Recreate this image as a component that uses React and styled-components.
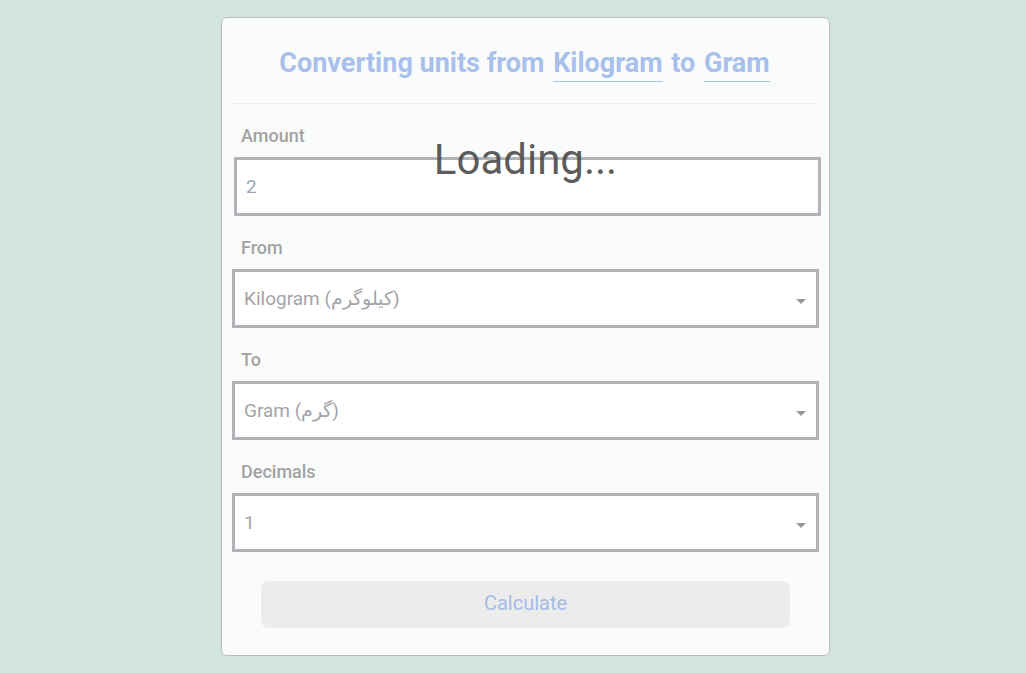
import styled, { createGlobalStyle } from 'styled-components';

const colors = {
  page: '#d2e4de',
  card: '#fafcfb',
  cardBorder: '#bdbdbd',
  accent: '#a8c0ec',
  label: '#a2a2a2',
  field: '#b1b3b8',
  value: '#a2a4a9',
};

const GlobalStyle = createGlobalStyle`
  body {
    margin: 0;
    background: ${colors.page};
    font-family: Roboto, 'Liberation Sans', sans-serif;
  }
`;

const Page = styled.div`
  display: flex;
  justify-content: center;
  align-items: flex-start;
  padding: 17px 0 0 25px;
`;

const Card = styled.div`
  position: relative;
  width: 609px;
  box-sizing: border-box;
  background: ${colors.card};
  border: 1px solid ${colors.cardBorder};
  border-radius: 6px;
  padding: 0 10px 27px;
`;

const Header = styled.div`
  height: 85px;
  display: flex;
  align-items: center;
  justify-content: center;
  border-bottom: 1px solid #eeeff0;
`;

const Title = styled.h1`
  margin: 0;
  font-size: 27px;
  font-weight: 700;
  color: ${colors.accent};
  line-height: 30px;
  padding-top: 8px;
`;

const Unit = styled.span`
  display: inline-block;
  border-bottom: 1px solid ${colors.accent};
  padding-bottom: 4px;
  line-height: 28px;
  margin: 0 2px;
`;

const Form = styled.div`
  display: flex;
  flex-direction: column;
  gap: 22px;
  padding-top: 22px;
`;

const Group = styled.div`
  display: flex;
  flex-direction: column;
  gap: 11px;
`;

const Label = styled.label`
  font-size: 18px;
  font-weight: 500;
  line-height: 20px;
  color: ${colors.label};
  padding-left: 9px;
`;

const Field = styled.div`
  position: relative;
  height: 59px;
  box-sizing: border-box;
  border: 3px solid ${colors.field};
  background: #fff;
  display: flex;
  align-items: center;
  padding: 0 9px;
  margin-left: ${({ $shift }) => ($shift ? '2px' : '0')};
  margin-right: ${({ $shift }) => ($shift ? '-2px' : '0')};
  font-size: 19px;
  color: ${({ $blue }) => ($blue ? '#9aa6b4' : colors.value)};
`;

const Caret = styled.span`
  position: absolute;
  right: 10px;
  top: 50%;
  width: 0;
  height: 0;
  border-left: 5px solid transparent;
  border-right: 5px solid transparent;
  border-top: 5px solid #9a9a9a;
`;

const ButtonRow = styled.div`
  display: flex;
  flex-direction: column;
  padding: 29px 29px 0;
`;

const Button = styled.button`
  height: 47px;
  border: none;
  border-radius: 8px;
  background: #ececec;
  color: #a6bbe6;
  font-family: Roboto, 'Liberation Sans', sans-serif;
  font-size: 20px;
  font-weight: 400;
  padding: 0 0 4px;
`;

const Loading = styled.div`
  position: absolute;
  top: 116px;
  left: 0;
  right: 0;
  text-align: center;
  font-size: 42px;
  line-height: 52px;
  color: rgba(70, 70, 70, 0.88);
  pointer-events: none;
`;

const Select = ({ value }) => (
  <Field>
    {value}
    <Caret />
  </Field>
);

const App = () => (
  <>
    <GlobalStyle />
    <Page>
      <Card>
        <Header>
          <Title>
            Converting units from <Unit>Kilogram</Unit> to <Unit>Gram</Unit>
          </Title>
        </Header>
        <Form>
          <Group>
            <Label>Amount</Label>
            <Field $shift $blue>2</Field>
          </Group>
          <Group>
            <Label>From</Label>
            <Select value="Kilogram (کیلوگرم)" />
          </Group>
          <Group>
            <Label>To</Label>
            <Select value="Gram (گرم)" />
          </Group>
          <Group>
            <Label>Decimals</Label>
            <Select value="1" />
          </Group>
        </Form>
        <ButtonRow>
          <Button>Calculate</Button>
        </ButtonRow>
        <Loading>Loading...</Loading>
      </Card>
    </Page>
  </>
);

export default App;
